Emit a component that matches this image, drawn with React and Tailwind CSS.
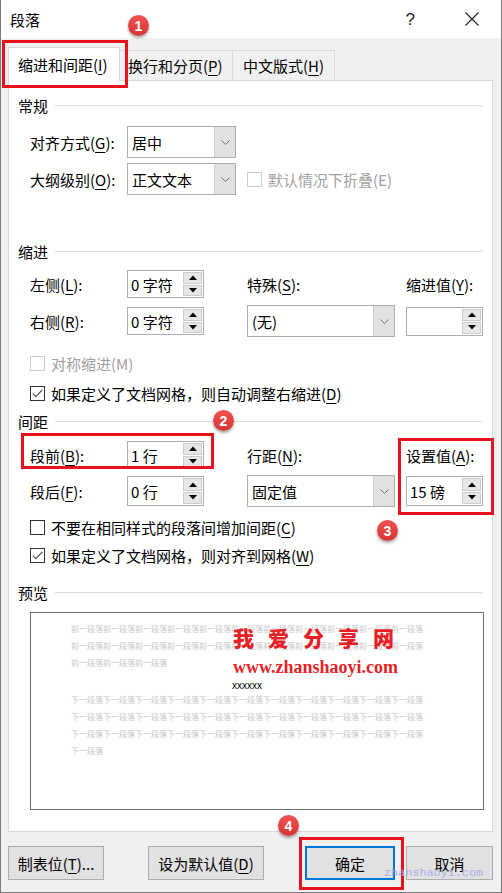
import React from "react";

const U = ({ children }) => (
  <span className="underline underline-offset-[3px] decoration-1">{children}</span>
);

function Header({ title, className = "" }) {
  return (
    <div className={`flex items-center h-[20px] pl-[9px] pr-[9px] ${className}`}>
      <span className="text-[15px] leading-none">{title}</span>
      <div className="flex-1 h-px bg-[#dcdcdc] ml-[7px]" />
    </div>
  );
}

function Chevron() {
  return (
    <svg width="9" height="5" viewBox="0 0 9 5">
      <path d="M0.5 0.5 L4.5 4.5 L8.5 0.5" fill="none" stroke="#707070" strokeWidth="1" />
    </svg>
  );
}

function Select({ value, className = "" }) {
  return (
    <div className={`flex border border-[#adadad] bg-white ${className}`}>
      <div className="flex-1 flex items-center pl-[4px] text-[15px] leading-none">{value}</div>
      <div className="w-[21px] bg-[#e1e1e1] border-l border-[#cfcfcf] flex items-center justify-center">
        <Chevron />
      </div>
    </div>
  );
}

function Tri({ up }) {
  return (
    <svg width="8" height="5" viewBox="0 0 8 5">
      <path d={up ? "M0 5 L4 0.5 L8 5 Z" : "M0 0 L4 4.5 L8 0 Z"} fill="#000" />
    </svg>
  );
}

function Spin({ value, className = "" }) {
  return (
    <div className={`flex border border-[#adadad] bg-white ${className}`}>
      <div className="flex-1 flex items-center pl-[3px] text-[15px] leading-none">{value}</div>
      <div className="w-[20px] flex flex-col gap-[1px] py-[1px] pr-[1px]">
        <div className="flex-1 bg-[#e6e6e6] border border-[#cccccc] flex items-center justify-center">
          <Tri up />
        </div>
        <div className="flex-1 bg-[#e6e6e6] border border-[#cccccc] flex items-center justify-center">
          <Tri />
        </div>
      </div>
    </div>
  );
}

function Check({ checked, disabled, children, className = "" }) {
  return (
    <div className={`flex items-center h-[20px] pl-[21px] ${className}`}>
      <div
        className={`w-[15px] h-[15px] border bg-white flex items-center justify-center ${
          disabled ? "border-[#cccccc]" : "border-[#333333]"
        }`}
      >
        {checked && (
          <svg width="11" height="9" viewBox="0 0 11 9">
            <path d="M0.8 4.6 L3.8 7.6 L10.2 1" fill="none" stroke="#555" strokeWidth="1.2" />
          </svg>
        )}
      </div>
      <span className={`ml-[6px] text-[15px] leading-none ${disabled ? "text-[#a0a0a0]" : "text-black"}`}>
        {children}
      </span>
    </div>
  );
}

function Badge({ n, className = "" }) {
  return (
    <div
      className={`absolute w-[21px] h-[21px] rounded-full bg-gradient-to-b from-[#ef5350] to-[#d63434] shadow-[0_2px_3px_rgba(0,0,0,0.35)] flex items-center justify-center text-white text-[14px] font-bold leading-none font-['Liberation_Sans',sans-serif] ${className}`}
    >
      {n}
    </div>
  );
}

function Btn({ children, primary, className = "" }) {
  return (
    <div
      className={`h-[34px] flex items-center justify-center bg-[#e1e1e1] text-[15px] leading-none ${
        primary ? "border-2 border-[#0078d7]" : "border border-[#adadad]"
      } ${className}`}
    >
      {children}
    </div>
  );
}

const prevLines = [
  "前一段落".repeat(11),
  "前一段落".repeat(11),
  "前一段落".repeat(3),
];
const nextLines = [
  "下一段落".repeat(11),
  "下一段落".repeat(11),
  "下一段落".repeat(11),
  "下一段落",
];

export default function App() {
  return (
    <div className="relative w-[502px] h-[893px] flex flex-col bg-[#f0f0f0] border-x border-b border-[#7a7a7a] text-black font-['Noto_Sans_CJK_SC',sans-serif] overflow-hidden">
      {/* Title bar */}
      <div className="h-[38px] bg-white flex items-center pl-[9px] shrink-0">
        <span className="text-[15px] leading-none">段落</span>
        <span className="ml-auto text-[17px] leading-none font-['Liberation_Sans',sans-serif] text-[#222]">?</span>
        <svg className="ml-[50px] mr-[22px]" width="14" height="14" viewBox="0 0 14 14">
          <path d="M0.5 0.5 L13.5 13.5 M13.5 0.5 L0.5 13.5" stroke="#222" strokeWidth="1.1" />
        </svg>
      </div>

      {/* Tabs */}
      <div className="h-[42px] flex items-end ml-[7px] shrink-0">
        <div className="relative z-10 -mb-px h-[34px] w-[112px] bg-white border border-b-0 border-[#d9d9d9] flex items-center pl-[9px] text-[15px] leading-none">
          缩进和间距(<U>I</U>)
        </div>
        <div className="h-[30px] w-[113px] border-t border-r border-[#d9d9d9] flex items-center pl-[8px] text-[15px] leading-none">
          换行和分页(<U>P</U>)
        </div>
        <div className="h-[30px] w-[102px] border-t border-r border-[#d9d9d9] flex items-center pl-[10px] text-[15px] leading-none">
          中文版式(<U>H</U>)
        </div>
      </div>

      {/* Panel */}
      <div className="ml-[7px] w-[485px] h-[752px] shrink-0 border border-[#d9d9d9] bg-white flex flex-col">
        <Header title="常规" className="mt-[14px]" />
        <div className="mt-[11px] h-[32px] flex items-center pl-[21px]">
          <span className="w-[97px] text-[15px] leading-none">对齐方式(<U>G</U>):</span>
          <Select value="居中" className="w-[109px] h-[32px]" />
        </div>
        <div className="mt-[5px] h-[32px] flex items-center pl-[21px]">
          <span className="w-[97px] text-[15px] leading-none">大纲级别(<U>O</U>):</span>
          <Select value="正文文本" className="w-[109px] h-[32px]" />
          <div className="ml-[11px] w-[15px] h-[15px] border border-[#cccccc]" />
          <span className="ml-[6px] text-[15px] leading-none text-[#a0a0a0]">默认情况下折叠(E)</span>
        </div>

        <Header title="缩进" className="mt-[46px]" />
        <div className="mt-[9px] h-[28px] flex items-center pl-[21px]">
          <span className="w-[97px] text-[15px] leading-none">左侧(<U>L</U>):</span>
          <Spin value="0 字符" className="w-[77px] h-[28px]" />
          <span className="ml-[43px] w-[159px] text-[15px] leading-none">特殊(<U>S</U>):</span>
          <span className="text-[15px] leading-none">缩进值(<U>Y</U>):</span>
        </div>
        <div className="mt-[7px] h-[32px] flex items-center pl-[21px]">
          <span className="w-[97px] text-[15px] leading-none">右侧(<U>R</U>):</span>
          <Spin value="0 字符" className="w-[77px] h-[28px]" />
          <Select value="(无)" className="ml-[43px] w-[148px] h-[32px]" />
          <Spin value="" className="ml-[11px] w-[77px] h-[29px]" />
        </div>
        <Check disabled className="mt-[16px]">对称缩进(M)</Check>
        <Check checked className="mt-[10px]">
          如果定义了文档网格，则自动调整右缩进(<U>D</U>)
        </Check>

        <Header title="间距" className="mt-[8px]" />
        <div className="mt-[10px] h-[28px] flex items-center pl-[21px]">
          <span className="w-[97px] text-[15px] leading-none">段前(<U>B</U>):</span>
          <Spin value="1 行" className="w-[77px] h-[28px]" />
          <span className="ml-[43px] w-[159px] text-[15px] leading-none">行距(<U>N</U>):</span>
          <span className="text-[15px] leading-none">设置值(<U>A</U>):</span>
        </div>
        <div className="mt-[6px] h-[32px] flex items-center pl-[21px]">
          <span className="w-[97px] text-[15px] leading-none">段后(<U>F</U>):</span>
          <Spin value="0 行" className="w-[77px] h-[30px]" />
          <Select value="固定值" className="ml-[43px] w-[148px] h-[32px]" />
          <Spin value="15 磅" className="ml-[11px] w-[77px] h-[30px]" />
        </div>
        <Check className="mt-[10px]">
          不要在相同样式的段落间增加间距(<U>C</U>)
        </Check>
        <Check checked className="mt-[8px]">
          如果定义了文档网格，则对齐到网格(<U>W</U>)
        </Check>

        <Header title="预览" className="mt-[17px]" />
        <div className="relative mt-[10px] ml-[21px] w-[454px] h-[198px] border border-[#6e6e6e] bg-white">
          <div className="pl-[40px] pt-[7px] w-[392px] text-[8px] leading-[17px] text-[#c8c8c8]">
            {prevLines.map((l, i) => (
              <div key={i} className="whitespace-nowrap">{l}</div>
            ))}
            <div className="mt-[10px] h-[10px] leading-[10px] text-center text-black font-['Liberation_Sans',sans-serif] text-[10px]">
              xxxxxx
            </div>
            {nextLines.map((l, i) => (
              <div key={i} className="whitespace-nowrap">{l}</div>
            ))}
          </div>
          {/* watermark */}
          <div className="absolute left-[202px] top-[12px] flex flex-col text-[#e61f26]">
            <span className="text-[21px] leading-[24px] font-black tracking-[14px] whitespace-nowrap">我爱分享网</span>
            <span className="mt-[8px] text-[18px] leading-[20px] font-bold font-['Liberation_Serif',serif] whitespace-nowrap">
              www.zhanshaoyi.com
            </span>
          </div>
        </div>
      </div>

      {/* Buttons */}
      <div className="flex items-start pt-[14px] ml-[7px]">
        <Btn className="w-[96px]">制表位(<U>T</U>)...</Btn>
        <Btn className="ml-[44px] w-[116px]">设为默认值(<U>D</U>)</Btn>
        <Btn primary className="ml-[41px] w-[90px]">确定</Btn>
        <Btn className="ml-[11px] w-[87px]">取消</Btn>
      </div>

      {/* annotations */}
      <div className="absolute left-[1px] top-[40px] w-[126px] h-[48px] border-[3px] border-[#e8131f] pointer-events-none" />
      <div className="absolute left-[20px] top-[433px] w-[193px] h-[36px] border-[3px] border-[#e8131f]" />
      <div className="absolute left-[397px] top-[438px] w-[96px] h-[77px] border-[3px] border-[#e8131f]" />
      <div className="absolute left-[298px] top-[837px] w-[105px] h-[53px] border-[3px] border-[#e8131f]" />
      <Badge n="1" className="left-[127px] top-[15px]" />
      <Badge n="2" className="left-[212px] top-[410px]" />
      <Badge n="3" className="left-[376px] top-[520px]" />
      <Badge n="4" className="left-[277px] top-[815px]" />
      <span className="absolute left-[383px] top-[868px] text-[11.8px] leading-none font-['Liberation_Mono',monospace] text-[#a9aee6]">
        zhanshaoyi.com
      </span>
    </div>
  );
}
